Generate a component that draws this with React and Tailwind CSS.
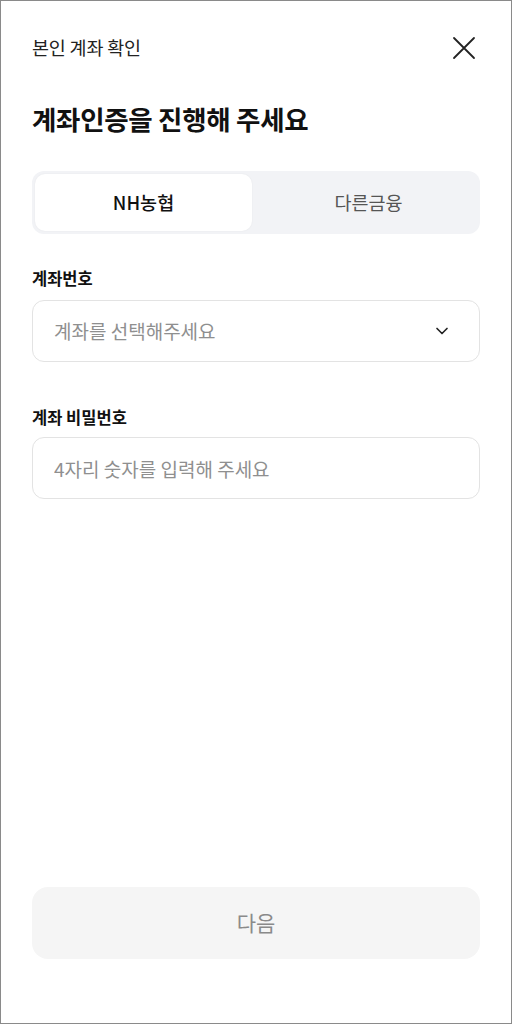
import React, { useState } from 'react';
import { ChevronDown } from 'lucide-react';

const font = { fontFamily: '"Noto Sans CJK KR", "Noto Sans", sans-serif' };

const CloseIcon = () => (
  <svg width="24" height="24" viewBox="0 0 24 24" fill="none" stroke="#222" strokeWidth="1.8" strokeLinecap="round">
    <path d="M2 2 L22 22 M22 2 L2 22" />
  </svg>
);

const App = () => {
  const [tab, setTab] = useState('nh');
  const [pin, setPin] = useState('');

  const tabClass = active =>
    `flex-1 rounded-[10px] text-[18.5px] ${active ? 'bg-white text-[#111] font-medium shadow-[0_0_2px_rgba(0,0,0,0.06)]' : 'text-[#555]'}`;

  return (
    <div
      className="w-[512px] h-[1024px] box-border border border-[#8a8a8a] bg-white flex flex-col px-[31px] pt-[28px] pb-[64px] text-[#111]"
      style={font}
    >
      {/* header */}
      <div className="flex items-center justify-between h-[38px]">
        <span className="text-[18.5px] text-[#222] tracking-[-0.2px]">본인 계좌 확인</span>
        <div className="mr-[4px]">
          <CloseIcon />
        </div>
      </div>

      <h1 className="mt-[35px] text-[26.5px] leading-[34px] font-bold tracking-[-0.3px]">계좌인증을 진행해 주세요</h1>

      {/* segmented tabs */}
      <div className="mt-[35px] h-[63px] rounded-[12px] bg-[#f2f3f6] p-[3px] flex gap-[8px]">
        <button onClick={() => setTab('nh')} className={tabClass(tab === 'nh')}>
          NH농협
        </button>
        <button onClick={() => setTab('other')} className={tabClass(tab === 'other')}>
          다른금융
        </button>
      </div>

      <label className="mt-[33px] text-[16.5px] leading-[22px] font-semibold">계좌번호</label>
      <div className="mt-[11px] h-[62px] rounded-[12px] border border-[#e3e3e3] flex items-center justify-between pl-[21px] pr-[27px]">
        <span className="text-[19px] text-[#8f8f8f]">계좌를 선택해주세요</span>
        <ChevronDown className="w-[20px] h-[20px] text-[#222]" strokeWidth={2} />
      </div>

      <label className="mt-[44px] text-[16.5px] leading-[22px] font-semibold">계좌 비밀번호</label>
      <input
        type="password"
        inputMode="numeric"
        maxLength={4}
        value={pin}
        onChange={e => setPin(e.target.value)}
        placeholder="4자리 숫자를 입력해 주세요"
        className="mt-[9px] h-[62px] rounded-[12px] border border-[#e3e3e3] px-[21px] text-[19px] outline-none placeholder:text-[#8f8f8f]"
      />

      <div className="flex-1" />

      <button className="h-[72px] rounded-[16px] bg-[#f5f5f5] text-[21px] text-[#8a8a8a]">다음</button>
    </div>
  );
};

export default App;
